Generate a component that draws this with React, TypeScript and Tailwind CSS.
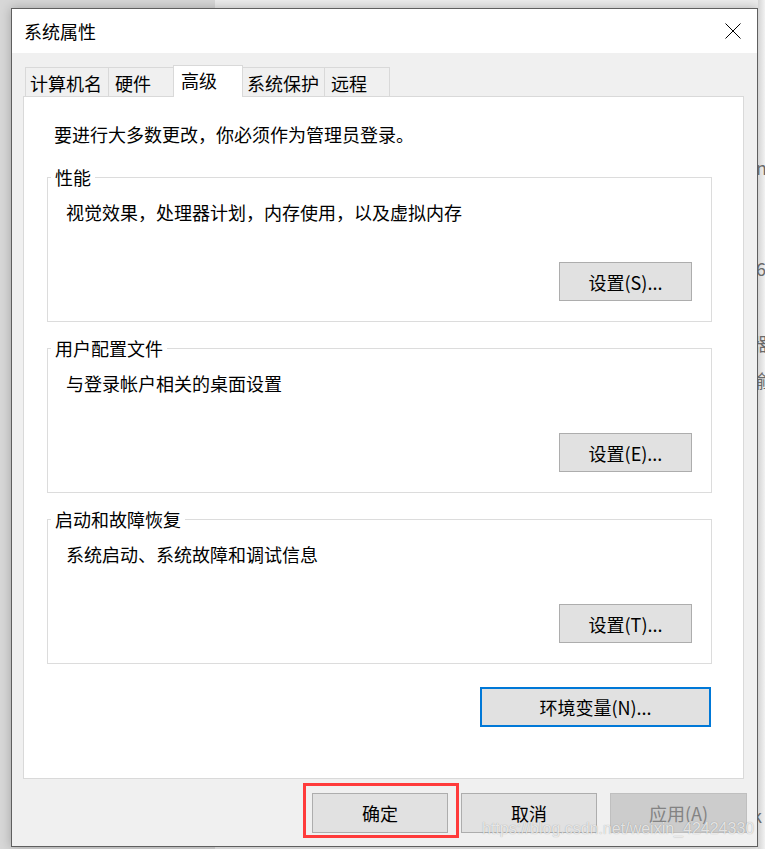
import React from 'react';

const font = { fontFamily: '"Noto Sans CJK SC", "Noto Sans", sans-serif' };

const tabs = [
  { label: '计算机名', w: 'w-[84px] pl-[4px]' },
  { label: '硬件', w: 'w-[66px] pl-[6px] -ml-px' },
  { label: '高级', w: 'w-[70px] pl-[7px] -ml-px', active: true },
  { label: '系统保护', w: 'w-[83px] pl-[4px] -ml-px' },
  { label: '远程', w: 'w-[66px] pl-[6px] -ml-px' },
];

const groups = [
  { title: '性能', desc: '视觉效果，处理器计划，内存使用，以及虚拟内存', btn: '设置(S)...' },
  { title: '用户配置文件', desc: '与登录帐户相关的桌面设置', btn: '设置(E)...' },
  { title: '启动和故障恢复', desc: '系统启动、系统故障和调试信息', btn: '设置(T)...' },
];

const CloseIcon = () => (
  <svg width="16" height="16" viewBox="0 0 16 16" shapeRendering="crispEdges">
    <path d="M0.5 0.5 L15.5 15.5 M15.5 0.5 L0.5 15.5" stroke="#000" strokeWidth="1" fill="none" shapeRendering="geometricPrecision" />
  </svg>
);

const GroupBox: React.FC<{ title: string; desc: string; btn: string }> = ({ title, desc, btn }) => (
  <div className="relative ml-[23px] w-[665px] h-[145px] border border-[#dcdcdc] flex flex-col pl-[18px] pr-[19px] pb-[20px]">
    <span className="absolute left-[3px] -top-[13px] px-[4px] bg-white text-[18px] leading-[24px] text-black">{title}</span>
    <div className="mt-[22px] text-[18px] leading-[24px] text-black">{desc}</div>
    <button className="mt-auto self-end w-[133px] h-[39px] bg-[#e1e1e1] border border-[#adadad] text-[18px] text-black leading-none">
      {btn}
    </button>
  </div>
);

export default function App() {
  return (
    <div
      className="relative w-[765px] h-[849px] overflow-hidden flex bg-[linear-gradient(to_right,#d7d7d7_215px,#ececec_215px)]"
      style={font}
    >
      {/* dialog */}
      <div className="ml-[11px] mt-[8px] w-[747px] h-[839px] shrink-0 border border-[#5f5f5f] bg-[#f0f0f0] flex flex-col shadow-[0_0_10px_rgba(0,0,0,0.25)]">
        <div className="h-[44px] bg-white flex items-center justify-between pl-[12px]">
          <span className="text-[18px] text-black leading-[24px]">系统属性</span>
          <div className="w-[46px] h-full flex items-center justify-center pr-[2px]">
            <CloseIcon />
          </div>
        </div>

        <div className="pt-[12px] pl-[11px]">
          <div className="flex items-end h-[31px] pl-[2px]">
            {tabs.map(t =>
              t.active ? (
                <div
                  key={t.label}
                  className={`${t.w} relative z-10 h-[32px] -mb-px bg-white border border-b-0 border-[#d9d9d9] flex items-center text-[18px] leading-[24px] text-black pb-[3px]`}
                >
                  {t.label}
                </div>
              ) : (
                <div
                  key={t.label}
                  className={`${t.w} h-[29px] bg-[#f0f0f0] border border-b-0 border-[#d9d9d9] flex items-center text-[18px] leading-[24px] text-black pt-[1px]`}
                >
                  {t.label}
                </div>
              )
            )}
          </div>

          <div className="w-[721px] h-[683px] bg-white border border-[#d9d9d9] flex flex-col">
            <div className="ml-[30px] mt-[25px] text-[18px] leading-[24px] text-black">
              要进行大多数更改，你必须作为管理员登录。
            </div>
            <div className="mt-[31px] flex flex-col gap-[26px]">
              {groups.map(g => (
                <GroupBox key={g.title} {...g} />
              ))}
            </div>
            <button className="mt-[23px] ml-[456px] w-[231px] h-[40px] bg-[#e1e1e1] border-2 border-[#0078d7] text-[18px] text-black leading-none">
              环境变量(N)...
            </button>
          </div>
        </div>

        <div className="flex justify-end gap-[13px] pr-[10px] mt-[14px]">
          <div className="relative">
            <button className="w-[136px] h-[40px] bg-[#e1e1e1] border border-[#adadad] text-[18px] text-black leading-none">
              确定
            </button>
            <div className="absolute -left-[9px] -top-[10px] -right-[11px] -bottom-[5px] border-[3px] border-[#ff3b3b] pointer-events-none" />
          </div>
          <button className="w-[136px] h-[40px] bg-[#e1e1e1] border border-[#adadad] text-[18px] text-black leading-none">
            取消
          </button>
          <button className="w-[137px] h-[40px] bg-[#cccccc] border border-[#bfbfbf] text-[18px] text-[#838383] leading-none">
            应用(A)
          </button>
        </div>
      </div>

      {/* window behind, right edge */}
      <div className="w-[7px] shrink-0 overflow-hidden bg-[linear-gradient(to_right,#d4d4d4,#f2f2f2)] text-[18px] leading-[24px] text-[#6a6a6a]">
        <div className="pt-[155px] -ml-[2px] flex flex-col">
          <span>n</span>
          <span className="mt-[77px]">6</span>
          <span className="mt-[51px] -ml-[6px]">器</span>
          <span className="mt-[13px] -ml-[6px]">输</span>
          <span className="mt-[411px] -ml-[4px]">k</span>
        </div>
      </div>

      {/* watermark */}
      <div
        className="absolute left-[482px] top-[819px] text-[16px] leading-[20px] text-[rgba(255,255,255,0.75)] [text-shadow:0_0_1px_rgba(0,0,0,0.35)] whitespace-nowrap pointer-events-none"
        style={{ fontFamily: '"Liberation Sans", Arial, sans-serif' }}
      >
        https://blog.csdn.net/weixin_42424330
      </div>
    </div>
  );
}
